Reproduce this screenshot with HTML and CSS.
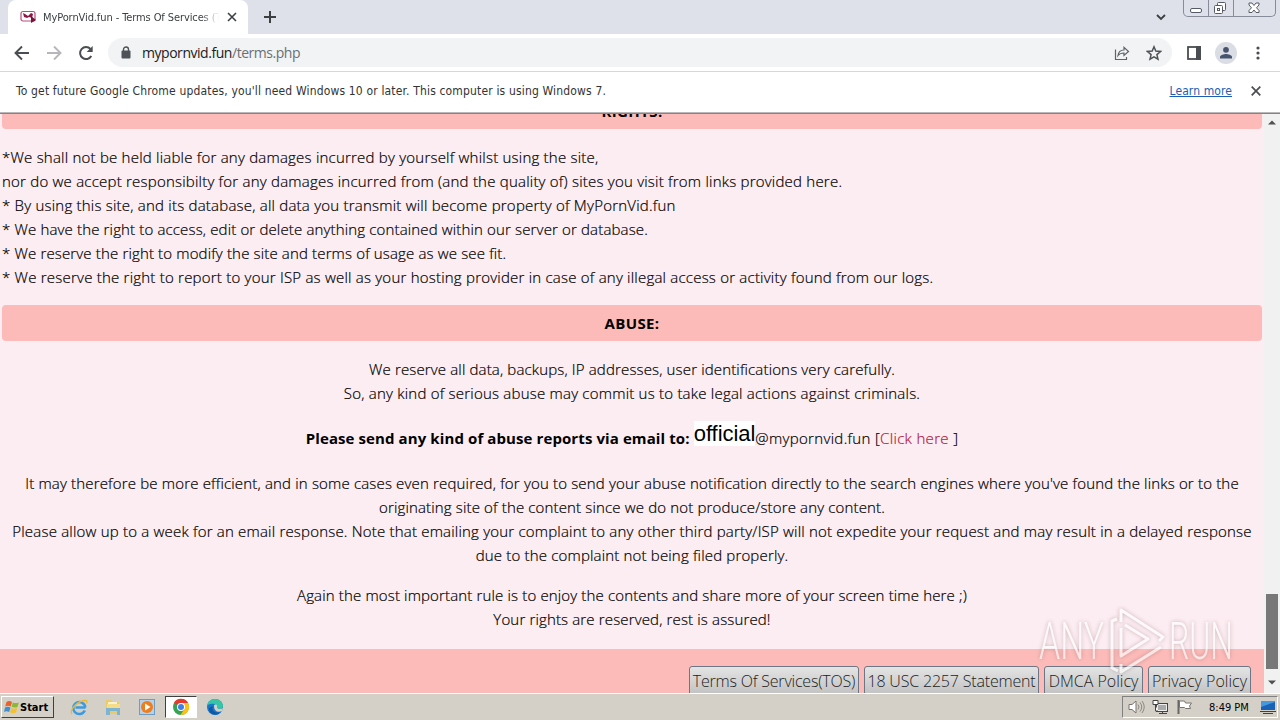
FILE: index.html
```html
<!DOCTYPE html>
<html lang="en">
<head>
    <meta charset="UTF-8">
    <title>MyPornVid.fun - Terms Of Services</title>
    <link rel="stylesheet" href="styles.css">
</head>
<body>
    <div class="screen">
        <header class="tabstrip">
            <div class="tab">
                <svg class="favicon" width="17" height="14" viewBox="0 0 17 14"><rect x="1" y="1.500" width="14" height="9.500" rx="2" fill="#fff" stroke="#b05080" stroke-width="1.200"/><path d="M3 3l2 1 3 2 3-3 2 1-1 4-3-1-2 1-3-1z" fill="#8d1747"/><path d="M11 6l5 4-5 3z" fill="#7a1238"/></svg>
                <span class="tab-title">MyPornVid.fun - Terms Of Services (T</span>
                <svg class="tab-close" width="10" height="10" viewBox="0 0 10 10"><path d="M1 1l8 8M9 1l-8 8" stroke="#3c4043" stroke-width="1.600"/></svg>
            </div>
            <svg class="new-tab" width="12" height="12" viewBox="0 0 12 12"><path d="M6 0v12M0 6h12" stroke="#3c4043" stroke-width="2"/></svg>
            <svg class="tab-search" width="10" height="7" viewBox="0 0 10 7"><path d="M1 1l4 4 4-4" fill="none" stroke="#3c4043" stroke-width="1.800"/></svg>
            <div class="window-buttons">
                <span><svg width="24" height="16" viewBox="0 0 24 16"><rect x="6.500" y="8.500" width="11" height="4" rx="1.500" fill="#fff" stroke="#555b66"/></svg></span>
                <span><svg width="24" height="16" viewBox="0 0 24 16"><g fill="#fff" stroke="#555b66"><rect x="8.500" y="2.500" width="8" height="8" rx="1"/><rect x="5.500" y="5.500" width="8" height="8" rx="1"/><rect x="8.500" y="8.500" width="2" height="2"/></g></svg></span>
                <span><svg width="41" height="16" viewBox="0 0 41 16"><path d="M15 3h3l2 2.500L22 3h3v2l-2.500 2.800L25 10.500v2h-3l-2-2.500-2 2.500h-3v-2l2.500-2.700L15 5z" fill="#fff" stroke="#555b66"/></svg></span>
            </div>
        </header>

        <div class="toolbar">
            <div class="nav">
                <svg width="16" height="16" viewBox="0 0 16 16"><path d="M15 8H2M8 1.500L1.500 8 8 14.500" fill="none" stroke="#4a4d51" stroke-width="1.900"/></svg>
                <svg width="16" height="16" viewBox="0 0 16 16"><path d="M1 8h13M8 1.500L14.500 8 8 14.500" fill="none" stroke="#b5b7ba" stroke-width="1.900"/></svg>
                <svg width="16" height="16" viewBox="0 0 16 16"><path d="M13.300 11A6 6 0 1 1 12.500 4" fill="none" stroke="#4a4d51" stroke-width="2"/><path d="M14.700 1v6H8.700z" fill="#4a4d51"/></svg>
            </div>
            <div class="omnibox">
                <svg width="10" height="13" viewBox="0 0 10 13"><path d="M2.500 6V3.500a2.500 2.500 0 0 1 5 0V6" fill="none" stroke="#4f5357" stroke-width="1.400"/><rect x="0.500" y="4.500" width="9" height="8" rx="1" fill="#4f5357"/></svg>
                <span class="url">mypornvid.fun<span>/terms.php</span></span>
                <svg class="share" width="16" height="16" viewBox="0 0 16 16"><path d="M1.500 4.500v10h11v-2.500" fill="none" stroke="#5f6368" stroke-width="1.200"/><path d="M4 10.500c.5-4 3-5.500 6-5.500V2.300L14.500 6.500 10 10.500V8C7.500 8 5.500 8.500 4 10.500z" fill="none" stroke="#5f6368" stroke-width="1.200"/></svg>
                <svg width="16" height="16" viewBox="0 0 16 16"><path d="M8 1.800l1.800 4.300 4.700.4-3.600 3.100 1.100 4.600L8 11.800l-4 2.400 1.100-4.600L1.500 6.500l4.700-.4z" fill="none" stroke="#4f5357" stroke-width="1.500"/></svg>
            </div>
            <svg class="panel" width="14" height="14" viewBox="0 0 14 14"><rect x="1" y="1" width="12" height="12" fill="none" stroke="#4a4d51" stroke-width="1.800"/><path d="M9 0h5v14H9z" fill="#4a4d51"/></svg>
            <svg class="avatar" width="22" height="22" viewBox="0 0 22 22"><circle cx="11" cy="11" r="11" fill="#dadde4"/><circle cx="11" cy="7.800" r="2.900" fill="#46536f"/><path d="M5 16.500v-1.500c0-2 4-3 6-3s6 1 6 3v1.500z" fill="#46536f"/></svg>
            <svg class="dots" width="4" height="14" viewBox="0 0 4 14"><g fill="#4a4d51"><circle cx="2" cy="2" r="1.600"/><circle cx="2" cy="7" r="1.600"/><circle cx="2" cy="12" r="1.600"/></g></svg>
        </div>

        <div class="infobar">
            <span class="notice">To get future Google Chrome updates, you'll need Windows 10 or later. This computer is using Windows 7.</span>
            <a class="learn">Learn more</a>
            <svg width="10" height="10" viewBox="0 0 10 10"><path d="M0.700 0.700l8.600 8.600M9.300 0.700l-8.600 8.600" stroke="#4a4d51" stroke-width="1.700"/></svg>
        </div>

        <div class="viewport">
            <main class="page">
                <h2 class="bar first">RIGHTS:</h2>
                <div class="rights">
                    <p>*We shall not be held liable for any damages incurred by yourself whilst using the site,</p>
                    <p>nor do we accept responsibilty for any damages incurred from (and the quality of) sites you visit from links provided here.</p>
                    <p>* By using this site, and its database, all data you transmit will become property of MyPornVid.fun</p>
                    <p class="tight">* We have the right to access, edit or delete anything contained within our server or database.</p>
                    <p class="tight">* We reserve the right to modify the site and terms of usage as we see fit.</p>
                    <p>* We reserve the right to report to your ISP as well as your hosting provider in case of any illegal access or activity found from our logs.</p>
                </div>
                <h2 class="bar">ABUSE:</h2>
                <div class="abuse">
                    <p class="tight">We reserve all data, backups, IP addresses, user identifications very carefully.</p>
                    <p>So, any kind of serious abuse may commit us to take legal actions against criminals.</p>
                    <p class="mail"><b>Please send any kind of abuse reports via email to:</b> <span class="official">official</span><span class="domain">@mypornvid.fun [<a>Click here</a> ]</span></p>
                    <p class="mid">It may therefore be more efficient, and in some cases even required, for you to send your abuse notification directly to the search engines where you've found the links or to the</p>
                    <p class="tight">originating site of the content since we do not produce/store any content.</p>
                    <p class="wide">Please allow up to a week for an email response. Note that emailing your complaint to any other third party/ISP will not expedite your request and may result in a delayed response</p>
                    <p class="mid">due to the complaint not being filed properly.</p>
                    <p class="tight again">Again the most important rule is to enjoy the contents and share more of your screen time here ;)</p>
                    <p class="tight">Your rights are reserved, rest is assured!</p>
                </div>
                <footer class="footer">
                    <a class="tos">Terms Of Services(TOS)</a>
                    <a class="usc">18 USC 2257 Statement</a>
                    <a class="dmca">DMCA Policy</a>
                    <a class="privacy">Privacy Policy</a>
                </footer>
            </main>
            <div class="scrollbar">
                <svg width="8" height="5" viewBox="0 0 8 5"><path d="M0 4.500L4 0.500l4 4z" fill="#505050"/></svg>
                <div class="thumb"></div>
                <svg width="8" height="5" viewBox="0 0 8 5"><path d="M0 0.500L4 4.500l4-4z" fill="#505050"/></svg>
            </div>
        </div>

        <svg class="watermark" width="200" height="74" viewBox="0 0 200 74">
            <g fill="#fff" font-family="Roboto" font-size="51" font-weight="300">
                <text x="2" y="55" textLength="65" lengthAdjust="spacingAndGlyphs">ANY</text>
                <text x="132" y="55" textLength="64" lengthAdjust="spacingAndGlyphs">RUN</text>
            </g>
            <g fill="none" stroke="#fff" stroke-width="3" stroke-linejoin="round">
                <path d="M80 15l-5 2v47l6 3M84 18V6l42 27-4 4M84 24v28l27-17L88 21M84 60v8l40-25"/>
            </g>
        </svg>

        <div class="taskbar">
            <div class="start">
                <svg width="16" height="16" viewBox="0 0 16 16"><path d="M2.500 3c2-1.500 4-1 5.500 0L6.800 7.500c-2-1-3.500-1-5.600 0z" fill="#e8622c"/><path d="M8.800 3.400c2 1 4 .8 6 0l-1.300 4.500c-2 1-4 .8-5.900-.1z" fill="#8cb838"/><path d="M1 8.500c2-1.200 4-1 5.500 0L5.200 13c-2-1-3.500-1-5.200 0z" fill="#3f8ed0"/><path d="M7.300 9c2 1 4 .8 6 0L12 13.500c-2 1-4 .8-6-.2z" fill="#f3c12e"/></svg>
                <span>Start</span>
            </div>
            <div class="quick">
                <span><svg width="18" height="18" viewBox="0 0 18 18"><path d="M15.500 9.500H5.500M14.800 12.500A6 6 0 1 1 15.300 9.500" fill="none" stroke="#3c9be0" stroke-width="2.500"/><path d="M2 16C-1 12 8 2 16 2.500c1.500.3 1 2 .5 3" fill="none" stroke="#e9b93a" stroke-width="1.300"/></svg></span>
                <span><svg width="18" height="18" viewBox="0 0 18 18"><path d="M2 2h5l1 2h7v12H2z" fill="#e9cb6c"/><path d="M4 4h9v6H4z" fill="#f9f2cc"/><path d="M3 6h13v4H3z" fill="#f4dc8b"/><path d="M2 10h14v7h-3v-4H6v4H2z" fill="#7cb4d4"/></svg></span>
                <span><svg width="18" height="18" viewBox="0 0 18 18"><rect x="1.500" y="1.500" width="15" height="15" fill="#b6d1e8" stroke="#6f9cc2"/><circle cx="9" cy="9" r="6" fill="#ef7d1a"/><path d="M7 5.500l5.500 3.500L7 12.500z" fill="#fff"/></svg></span>
                <span class="active"><svg width="18" height="18" viewBox="0 0 18 18"><circle cx="9" cy="9" r="8" fill="#35a353"/><path d="M9 9L2 5a8 8 0 0 1 14 0z" fill="#e33b2e"/><path d="M9 5h7a8 8 0 0 1-7.500 12l4-6z" fill="#fbc116"/><circle cx="9" cy="9" r="4" fill="#fff"/><circle cx="9" cy="9" r="3" fill="#3f7fe8"/></svg></span>
                <span><svg width="18" height="18" viewBox="0 0 18 18"><circle cx="9" cy="9" r="8" fill="#1677c8"/><path d="M1.500 7C3-1 16-1 17 8c0 3-4 4-6 2 1-3-3-6-9.500-3z" fill="#36c5a5"/><path d="M7 8c-2 4 2 8 7 6-3 5-12 2-11-4z" fill="#1157a5"/><path d="M8 8c0-2 4-2 3 1 0 2 3 3 6 1l-1 3c-4 2-8 0-8-5z" fill="#d4d0c8"/></svg></span>
            </div>
            <div class="tray">
                <svg width="17" height="16" viewBox="0 0 17 16"><path d="M1 5.500h3L8 2v12l-4-3.500H1z" fill="#fff" stroke="#77746f"/><path d="M10 5.500q2 2.500 0 5M12 3.500q3.500 4.500 0 9M14 2q4.500 6 0 12" fill="none" stroke="#8c8983"/></svg>
                <svg width="17" height="16" viewBox="0 0 17 16"><rect x="4.500" y="4.500" width="11" height="8" fill="#aaa" stroke="#444"/><path d="M5.500 5.500h9v6h-9z" fill="none" stroke="#eee"/><path d="M7 14.500h8M10.500 12v2" stroke="#444"/><path d="M1 1.500h5v4H1zM3.500 6v6H6" fill="#fff" stroke="#444"/></svg>
                <svg width="17" height="16" viewBox="0 0 17 16"><path d="M2.500 1v14" stroke="#666" stroke-width="2"/><path d="M3.500 2h5l1 2h6l-2 3 1 2.500h-5l-1-1h-5z" fill="#fff" stroke="#77746f"/></svg>
                <span class="clock">8:49 PM</span>
                <svg width="16" height="14" viewBox="0 0 16 14"><path d="M1 1h14v9H1z" fill="#1862b8"/><path d="M1 7l14-5V1H1z" fill="#4799dd"/><path d="M0 11h16v1H0zM3 13h10v1H3z" fill="#28466a"/></svg>
            </div>
        </div>
    </div>
</body>
</html>
```
FILE: styles.css
```css
* { box-sizing: border-box; }
body { margin: 0; overflow: hidden; font-family: "Open Sans", sans-serif; }
svg { display: block; flex-shrink: 0; }
.screen { width: 1280px; height: 720px; display: flex; flex-direction: column; position: relative; background: #fff; }

/* browser */
.tabstrip { height: 34px; background: #dee1e9; display: flex; align-items: flex-start; font-family: "DejaVu Sans Condensed", "DejaVu Sans", sans-serif; }
.tab { width: 240px; height: 34px; margin-left: 8px; background: #fff; border-radius: 8px 8px 0 0; display: flex; align-items: center; padding-left: 12px; }
.tab-title { width: 176px; margin-left: 6px; overflow: hidden; white-space: nowrap; font-size: 11px; letter-spacing: -0.1px; color: #3c4043; -webkit-mask-image: linear-gradient(to right, #000 158px, transparent 176px); mask-image: linear-gradient(to right, #000 158px, transparent 176px); }
.tab-close { margin-left: 8px; }
.new-tab { margin: 11px 0 0 16px; }
.tab-search { margin: 14px 0 0 auto; }
.window-buttons { display: flex; height: 17px; margin: 0 4px 0 17px; border: 1px solid #868c99; border-top: 0; border-radius: 0 0 5px 5px; }
.window-buttons span + span { border-left: 1px solid #868c99; }
.toolbar { height: 38px; display: flex; align-items: center; border-bottom: 1px solid #d5d7da; padding-left: 14px; }
.nav { display: flex; gap: 16px; }
.omnibox { width: 1064px; height: 29px; margin-left: 14px; border-radius: 15px; background: #f1f3f4; display: flex; align-items: center; padding: 0 10px 0 13px; }
.url { margin-left: 11px; font-size: 14px; letter-spacing: -0.46px; color: #202124; }
.url span { color: #6b6f74; }
.share { margin: 0 16px 0 auto; }
.panel { margin-left: 15px; }
.avatar { margin-left: 14px; }
.dots { margin-left: 19px; }
.infobar { height: 41px; display: flex; align-items: center; padding: 0 19px 2px 16px; border-bottom: 1px solid #b9b7b8; font-family: "DejaVu Sans Condensed", "DejaVu Sans", sans-serif; font-size: 12px; color: #333; }
.notice { letter-spacing: 0.16px; white-space: nowrap; }
.learn { margin: 0 19px 0 auto; color: #1a5fb4; letter-spacing: 0.1px; text-decoration: underline; }

/* page */
.viewport { height: 580px; display: flex; overflow: hidden; background: #fcedf2; border-top: 1px solid #8b8183; }
.page { width: 1264px; font-size: 15px; line-height: 24px; font-weight: 300; letter-spacing: 0.22px; color: #000; }
.page p { margin: 0; white-space: nowrap; -webkit-text-stroke: 0.2px; }
.page .tight { letter-spacing: 0.15px; }
.page .mid { letter-spacing: 0.17px; }
.page .wide { letter-spacing: 0.2px; }
.bar { height: 36px; margin: 16px 2px 16px; border-radius: 4px; background: #fcbbb9; text-align: center; font-size: 15px; line-height: 36px; letter-spacing: 0.4px; color: #000; }
.bar.first { margin-top: -21px; }
.rights { padding-left: 2px; height: 144px; }
.abuse { text-align: center; }
.page .mail { margin: 19px 0 21px; }
.mail b { font-weight: 700; letter-spacing: 0.1px; -webkit-text-stroke: 0; }
.official { font: 22px/20px "Liberation Sans", sans-serif; letter-spacing: -0.05px; vertical-align: 3px; background: #fff; -webkit-text-stroke: 0; }
.domain { letter-spacing: 0.33px; }
.mail a { color: #b01c3c; }
.page .again { margin-top: 16px; }
.footer { height: 50px; margin-top: 18px; padding: 17px 13px 0 0; background: #fcbbb9; display: flex; justify-content: flex-end; gap: 5px; }
.footer a { height: 34px; border: 1px solid #6d7684; border-radius: 3px; background: linear-gradient(#e4e4e4, #bcbcbc); line-height: 28px; text-align: center; white-space: nowrap; font-size: 16px; letter-spacing: 0; color: #222; }
.footer .tos { width: 170px; letter-spacing: -0.2px; }
.footer .usc { width: 175px; letter-spacing: -0.18px; }
.dmca { width: 99px; }
.privacy { width: 103px; }
.scrollbar { width: 16px; background: #f1f1f1; display: flex; flex-direction: column; align-items: center; padding: 6px 0 8px; }
.thumb { width: 12px; height: 75px; margin: auto 0 11px; background: #787878; }
.watermark { position: absolute; left: 1037px; top: 604px; opacity: 0.65; filter: drop-shadow(0 0 2px rgba(120, 80, 80, 0.6)); }

/* taskbar */
.taskbar { height: 27px; background: #d4d0c8; border-top: 1px solid #fff; display: flex; align-items: center; font-family: "DejaVu Sans Condensed", "DejaVu Sans", sans-serif; font-size: 11px; }
.start { width: 53px; height: 22px; margin-left: 1px; padding-left: 2px; display: flex; align-items: center; border: 1px solid; border-color: #fff #404040 #404040 #fff; font-weight: bold; }
.quick { display: flex; margin-left: 9px; }
.quick span { width: 32px; height: 22px; margin-right: 2px; display: flex; align-items: center; justify-content: center; }
.quick .active { background: #fff; border: 1px solid; border-color: #404040 #fff #fff #404040; }
.tray { height: 22px; width: 156px; margin: 0 2px 0 auto; padding-left: 5px; display: flex; align-items: center; gap: 7px; border: 1px solid; border-color: #808080 #fff #fff #808080; }
.clock { margin: 0 4px 0 9px; white-space: nowrap; }
```
